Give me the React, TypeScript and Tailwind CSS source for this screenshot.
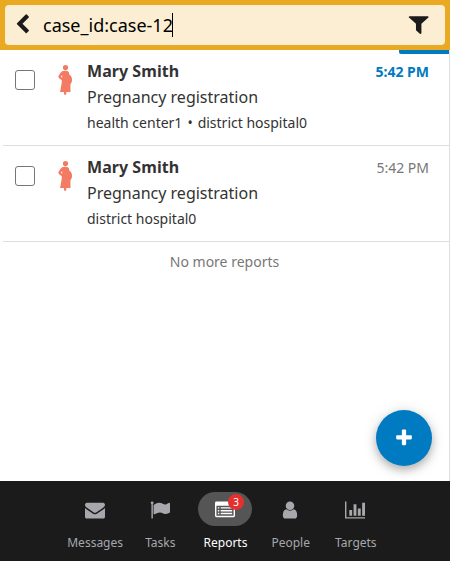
import type { ReactNode } from "react";

const PATHS = {
  back: "M1427 301l-531 531 531 531q19 19 19 45t-19 45l-166 166q-19 19-45 19t-45-19l-742-742q-19-19-19-45t19-45l742-742q19-19 45-19t45 19l166 166q19 19 19 45t-19 45z",
  filter: "M1595 295q17 41-14 70l-493 493v742q0 42-39 59-13 5-25 5-27 0-45-19l-256-256q-19-19-19-45v-486l-493-493q-31-29-14-70 17-39 59-39h1280q42 0 59 39z",
  plus: "M1600 736v192q0 40-28 68t-68 28h-416v416q0 40-28 68t-68 28h-192q-40 0-68-28t-28-68v-416h-416q-40 0-68-28t-28-68v-192q0-40 28-68t68-28h416v-416q0-40 28-68t68-28h192q40 0 68 28t28 68v416h416q40 0 68 28t28 68z",
  envelope: "M1792 710v794q0 66-47 113t-113 47h-1472q-66 0-113-47t-47-113v-794q44 49 101 87 362 246 497 345 57 42 92.5 65.5t94.5 48 110 24.5h2q51 0 110-24.5t94.5-48 92.5-65.5q170-123 498-345 57-39 100-87zm0-294q0 79-49 151t-122 123q-376 261-468 325-10 7-42.5 31t-54 38.5-52 32.5-57.5 27-50 9h-2q-23 0-50-9t-57.5-27-52-32.5-54-38.5-42.5-31q-91-64-262-182.5t-205-142.5q-62-42-117-115.5t-55-136.5q0-78 41.5-130t118.5-52h1472q65 0 112.5 47t47.5 113z",
  flag: "M320 256q0 72-64 110v1266q0 13-9.5 22.5t-22.5 9.5h-64q-13 0-22.5-9.5t-9.5-22.5v-1266q-64-38-64-110 0-53 37.5-90.5t90.5-37.5 90.5 37.5 37.5 90.5zm1472 64v763q0 25-12.5 38.5t-39.5 27.5q-215 116-369 116-61 0-123.5-22t-108.5-48-115.5-48-142.5-22q-192 0-464 146-17 9-33 9-26 0-45-19t-19-45v-742q0-32 31-55 21-14 79-43 236-120 421-120 107 0 200 29t219 88q38 19 88 19 54 0 117.5-21t110-47 88-47 54.5-21q26 0 45 19t19 45z",
  list: "M128 128h1536q128 0 128 128v1152q0 128-128 128h-1536q-128 0-128-128v-1152q0-128 128-128zm0 390v890h1536v-890zM256 640h128v128h-128zM512 640h1024v128h-1024zM256 896h128v128h-128zM512 896h1024v128h-1024zM256 1152h128v128h-128zM512 1152h1024v128h-1024z",
  user: "M1536 1399q0 109-62.5 187t-150.5 78h-854q-88 0-150.5-78t-62.5-187q0-85 8.5-160.5t31.5-152 58.5-131 94-89 134.5-34.5q131 128 313 128t313-128q76 0 134.5 34.5t94 89 58.5 131 31.5 152 8.5 160.5zm-256-887q0 159-112.5 271.5t-271.5 112.5-271.5-112.5-112.5-271.5 112.5-271.5 271.5-112.5 271.5 112.5 112.5 271.5z",
  chart: "M640 896v512h-256v-512h256zm384-512v1024h-256v-1024h256zm1024 1152v128h-2048v-1536h128v1408h1920zm-640-768v640h-256v-640h256zm384-512v1152h-256v-1152h256z",
};

function Icon({ name, className }: { name: keyof typeof PATHS; className: string }) {
  return (
    <svg viewBox="0 0 1792 1792" preserveAspectRatio="none" fill="currentColor" fillRule="evenodd" className={`shrink-0 ${className}`}>
      <path d={PATHS[name]} />
    </svg>
  );
}

function PregnantIcon() {
  return (
    <svg viewBox="0 0 15 30" fill="#f47b63" className="mt-[7px] ml-[23px] h-[30px] w-[15px] shrink-0">
      <circle cx="7.5" cy="2.6" r="2.6" />
      <path
        fillRule="evenodd"
        d="M4.6 6.1Q7.5 5.2 10 6.2Q11.4 7 11.2 9.3Q14.1 11.6 14.1 14.8Q14.1 17.6 12.4 19.6L12.5 26.9H8.3V29.3Q7.2 30.4 6 29.3V26.9H2.1L3.9 16.8L3.6 15.1Q.1 13.2 .3 11.6Q1.2 8.2 4.6 6.1ZM4 10.3L2.8 11.6L4.1 12.7Q4.4 11.4 4 10.3Z"
      />
    </svg>
  );
}

function Report({ place, unread }: { place: ReactNode; unread?: boolean }) {
  return (
    <li className="ml-[3px] flex h-24 border-b border-[#dedede] pt-2 pl-3">
      <input type="checkbox" aria-label="Select report" className="mt-3 size-5 shrink-0 appearance-none rounded-[3px] border border-[#767676] bg-white" />
      <PregnantIcon />
      <div className="ml-[14px] min-w-0 flex-1">
        <div className="flex justify-between pr-5">
          <h2 className="text-[16px] leading-[26px] font-bold tracking-[0.05px]">Mary Smith</h2>
          <time className={unread ? "text-[14px] leading-7 font-bold text-[#007ac0]" : "text-[14px] leading-7 text-[#777]"}>5:42 PM</time>
        </div>
        <p className="-mt-[2px] text-[16px] leading-[26px]">Pregnancy registration</p>
        <p className="text-[14px] leading-[25px]">{place}</p>
      </div>
    </li>
  );
}

const tabs: { label: string; icon: keyof typeof PATHS; badge?: number }[] = [
  { label: "Messages", icon: "envelope" },
  { label: "Tasks", icon: "flag" },
  { label: "Reports", icon: "list", badge: 3 },
  { label: "People", icon: "user" },
  { label: "Targets", icon: "chart" },
];

export default function App() {
  return (
    <div className="relative flex h-[561px] w-[450px] flex-col overflow-hidden bg-white font-['Noto_Sans',sans-serif] text-[#333]">
      <header className="h-[50px] bg-[#e9aa22] p-[5px]">
        <div className="flex h-10 items-center rounded-[4px] bg-[#fceed3] pr-[13.3px] pl-[7px] text-[#1b1b1b]">
          <Icon name="back" className="mb-px size-[21px]" />
          <span className="ml-[10px] text-[18px] leading-6 text-black">case_id:case-12</span>
          <span className="-ml-px h-6 w-px bg-black" />
          <Icon name="filter" className="mb-[2px] ml-auto h-[22.5px] w-[25.4px]" />
        </div>
      </header>
      <main className="flex-1 border-r border-[#dedede]">
        <div className="-mb-1 ml-auto h-1 w-[50px] rounded-bl-[2px] bg-[#007ac0]" />
        <ul>
          <Report unread place={<>health center1<span className="mx-[5px]">•</span>district hospital0</>} />
          <Report place="district hospital0" />
        </ul>
        <p className="pt-2 text-center text-[14px] leading-6 text-[#777]">No more reports</p>
      </main>
      <button aria-label="Add report" className="absolute top-[410px] left-[376px] flex size-14 items-center justify-center rounded-full bg-[#007ac0] text-white shadow-[0_4px_8px_rgba(0,0,0,0.25),0_2px_16px_rgba(0,0,0,0.12)]">
        <Icon name="plus" className="size-5" />
      </button>
      <nav className="flex h-20 justify-center bg-[#1b1b1b] pt-[11px] text-[#a7a8ac]">
        {tabs.map(({ label, icon, badge }) => (
          <a key={label} className={badge ? "flex w-[65.2px] flex-col items-center text-white" : "flex w-[65.2px] flex-col items-center"}>
            <span className={badge ? "relative flex h-[34px] w-[54px] items-center justify-center rounded-full bg-[#555] pt-[2px]" : "flex h-[34px] w-[54px] items-center justify-center pt-[2px]"}>
              <Icon name={icon} className="size-5" />
              {badge && <span className="absolute top-[2px] left-[30px] flex size-4 items-center justify-center rounded-full bg-[#e33030] text-[10px] leading-none text-white">{badge}</span>}
            </span>
            <span className="mt-[7px] pl-px text-[12px] leading-5">{label}</span>
          </a>
        ))}
      </nav>
    </div>
  );
}
